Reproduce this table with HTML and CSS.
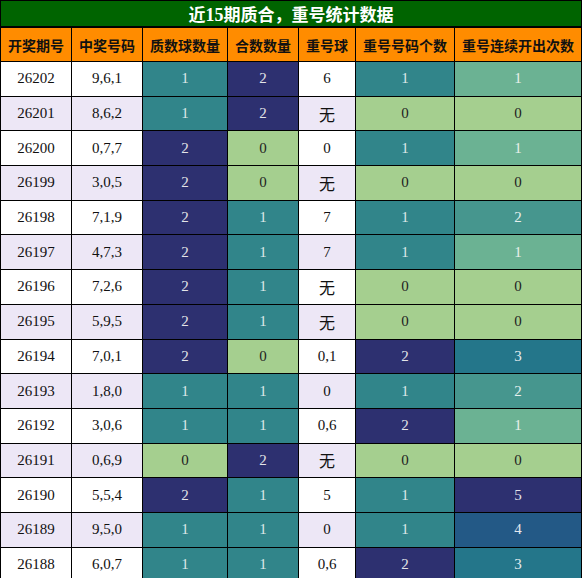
FILE: index.html
```html
<!DOCTYPE html>
<html lang="zh-CN">
<head>
    <meta charset="UTF-8">
    <meta name="viewport" content="width=device-width, initial-scale=1.0">
    <title>近15期质合，重号统计数据</title>
    <link rel="stylesheet" href="styles.css">
</head>
<body>
    <div class="board">
        <div class="title">近<span class="num">15</span>期质合，重号统计数据</div>
        <div class="grid">
            <div class="cell head">开奖期号</div>
            <div class="cell head">中奖号码</div>
            <div class="cell head">质数球数量</div>
            <div class="cell head">合数数量</div>
            <div class="cell head">重号球</div>
            <div class="cell head">重号号码个数</div>
            <div class="cell head">重号连续开出次数</div>

            <div class="row">
                <div class="cell">26202</div><div class="cell">9,6,1</div>
                <div class="cell teal">1</div><div class="cell navy">2</div>
                <div class="cell">6</div>
                <div class="cell teal">1</div><div class="cell g1">1</div>
            </div>
            <div class="row alt">
                <div class="cell">26201</div><div class="cell">8,6,2</div>
                <div class="cell teal">1</div><div class="cell navy">2</div>
                <div class="cell cjk">无</div>
                <div class="cell light">0</div><div class="cell light">0</div>
            </div>
            <div class="row">
                <div class="cell">26200</div><div class="cell">0,7,7</div>
                <div class="cell navy">2</div><div class="cell light">0</div>
                <div class="cell">0</div>
                <div class="cell teal">1</div><div class="cell g1">1</div>
            </div>
            <div class="row alt">
                <div class="cell">26199</div><div class="cell">3,0,5</div>
                <div class="cell navy">2</div><div class="cell light">0</div>
                <div class="cell cjk">无</div>
                <div class="cell light">0</div><div class="cell light">0</div>
            </div>
            <div class="row">
                <div class="cell">26198</div><div class="cell">7,1,9</div>
                <div class="cell navy">2</div><div class="cell teal">1</div>
                <div class="cell">7</div>
                <div class="cell teal">1</div><div class="cell g2">2</div>
            </div>
            <div class="row alt">
                <div class="cell">26197</div><div class="cell">4,7,3</div>
                <div class="cell navy">2</div><div class="cell teal">1</div>
                <div class="cell">7</div>
                <div class="cell teal">1</div><div class="cell g1">1</div>
            </div>
            <div class="row">
                <div class="cell">26196</div><div class="cell">7,2,6</div>
                <div class="cell navy">2</div><div class="cell teal">1</div>
                <div class="cell cjk">无</div>
                <div class="cell light">0</div><div class="cell light">0</div>
            </div>
            <div class="row alt">
                <div class="cell">26195</div><div class="cell">5,9,5</div>
                <div class="cell navy">2</div><div class="cell teal">1</div>
                <div class="cell cjk">无</div>
                <div class="cell light">0</div><div class="cell light">0</div>
            </div>
            <div class="row">
                <div class="cell">26194</div><div class="cell">7,0,1</div>
                <div class="cell navy">2</div><div class="cell light">0</div>
                <div class="cell">0,1</div>
                <div class="cell navy">2</div><div class="cell g3">3</div>
            </div>
            <div class="row alt">
                <div class="cell">26193</div><div class="cell">1,8,0</div>
                <div class="cell teal">1</div><div class="cell teal">1</div>
                <div class="cell">0</div>
                <div class="cell teal">1</div><div class="cell g2">2</div>
            </div>
            <div class="row">
                <div class="cell">26192</div><div class="cell">3,0,6</div>
                <div class="cell teal">1</div><div class="cell teal">1</div>
                <div class="cell">0,6</div>
                <div class="cell navy">2</div><div class="cell g1">1</div>
            </div>
            <div class="row alt">
                <div class="cell">26191</div><div class="cell">0,6,9</div>
                <div class="cell light">0</div><div class="cell navy">2</div>
                <div class="cell cjk">无</div>
                <div class="cell light">0</div><div class="cell light">0</div>
            </div>
            <div class="row">
                <div class="cell">26190</div><div class="cell">5,5,4</div>
                <div class="cell navy">2</div><div class="cell teal">1</div>
                <div class="cell">5</div>
                <div class="cell teal">1</div><div class="cell navy">5</div>
            </div>
            <div class="row alt">
                <div class="cell">26189</div><div class="cell">9,5,0</div>
                <div class="cell teal">1</div><div class="cell teal">1</div>
                <div class="cell">0</div>
                <div class="cell teal">1</div><div class="cell g4">4</div>
            </div>
            <div class="row">
                <div class="cell">26188</div><div class="cell">6,0,7</div>
                <div class="cell teal">1</div><div class="cell teal">1</div>
                <div class="cell">0,6</div>
                <div class="cell navy">2</div><div class="cell g3">3</div>
            </div>
        </div>
    </div>
</body>
</html>
```

FILE: styles.css
```css
/* Lottery stats table */

body {
    margin: 0;
    background: #fff;
}

.board {
    width: 582px;
    height: 578px;
    overflow: hidden;
    box-sizing: border-box;
    background: #000;
    padding: 1px 1px 0;
}

.title {
    height: 25px;
    margin-bottom: 2px;
    background: #006400;
    color: #fff;
    font-family: "Noto Sans CJK SC", sans-serif;
    font-weight: bold;
    font-size: 17px;
    line-height: 25px;
    text-align: center;
}

.title .num {
    font-family: "Liberation Serif", serif;
    font-size: 18px;
}

.grid {
    display: grid;
    grid-template-columns: 70px 70px 84px 70px 56px 98px 126px;
    grid-template-rows: 33px repeat(15, 33.7px);
    gap: 1px;
}

.row {
    display: contents;
}

.cell {
    display: flex;
    align-items: center;
    justify-content: center;
    background: #fff;
    color: #111;
    font-family: "Liberation Serif", serif;
    font-size: 15px;
}

.row.alt .cell {
    background: #ede7f6;
}

.cell.head {
    background: #ff8c00;
    color: #111;
    font-family: "Noto Sans CJK SC", sans-serif;
    font-weight: bold;
    font-size: 14px;
}

.cell.cjk {
    font-family: "Noto Sans CJK SC", sans-serif;
    font-size: 16px;
}

.row .cell.navy { background: #2d3070; color: #e4e4e8; }
.row .cell.teal { background: #31858a; color: #dde8e8; }
.row .cell.light { background: #a5cf8f; color: #222; }
.row .cell.g1 { background: #6bb293; color: #e8f0ea; }
.row .cell.g2 { background: #46968e; color: #e8f0ee; }
.row .cell.g3 { background: #24768a; color: #e4ecee; }
.row .cell.g4 { background: #235986; color: #e4e8ee; }
```
